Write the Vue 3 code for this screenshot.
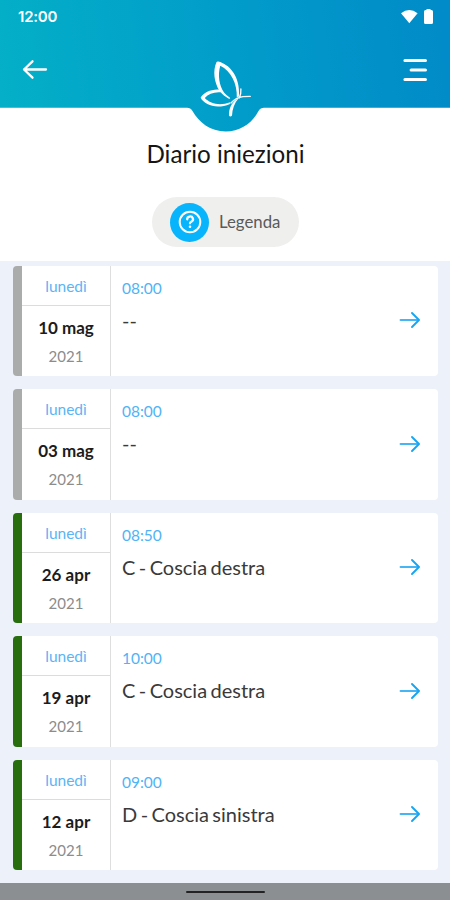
<script setup>
const entries = [
  { day: 'lunedì', date: '10 mag', year: '2021', time: '08:00', site: '--', done: false },
  { day: 'lunedì', date: '03 mag', year: '2021', time: '08:00', site: '--', done: false },
  { day: 'lunedì', date: '26 apr', year: '2021', time: '08:50', site: 'C - Coscia destra', done: true },
  { day: 'lunedì', date: '19 apr', year: '2021', time: '10:00', site: 'C - Coscia destra', done: true },
  { day: 'lunedì', date: '12 apr', year: '2021', time: '09:00', site: 'D - Coscia sinistra', done: true },
]
</script>

<template>
  <div class="screen">
    <header class="header">
      <svg class="backdrop" width="450" height="132" viewBox="0 0 450 132">
        <defs>
          <linearGradient id="sea" gradientUnits="userSpaceOnUse" x1="0" y1="80" x2="450" y2="25">
            <stop offset="0" stop-color="#04afc7" />
            <stop offset="0.5" stop-color="#019dca" />
            <stop offset="1" stop-color="#018bc8" />
          </linearGradient>
        </defs>
        <path fill="url(#sea)" d="M0 0H450V107.700H264Q260.500 107.700 258.500 111C253 122 241 131.500 225.700 131.500S198.500 122 192.500 111Q190.500 107.700 187 107.700H0Z" />
        <g fill="#fff" fill-rule="evenodd">
          <path d="M218.300 61.500C229 64 240.500 76 239 96.500L236.800 97.500C237.300 84 231 71 220.300 65.800C217.500 75 219.300 86 224 92.500Q226.500 95.500 230.300 98L229.300 99C225.500 97 222 94.500 219.500 90.800C214 82 212.800 71 216.300 62.500Q217 61.200 218.300 61.500Z" />
          <path d="M220 89.700C212 88.700 203.500 92.500 200.600 97.800C205 105.500 217 109.500 230 104L230.300 102.200C220 106 210.500 104 204.800 98C208.500 93.500 214.500 91.500 221.700 92.300Z" />
          <path d="M229 115.800C228.700 109 231 104 236 99.800L238.500 98.600C234.500 103 232.300 109 232 115.500Q230.500 117.300 229 115.800Z" />
        </g>
        <path fill="none" stroke="#fff" stroke-width="1.300" stroke-linecap="round" d="M231 103Q236 97.500 243 96.700L250.300 96.400M239.300 98Q241.300 93.500 240.900 89" />
      </svg>
      <div class="status">
        <span class="clock">12:00</span>
        <svg class="signals" width="34" height="16" viewBox="0 0 34 16" fill="#fff">
          <path d="M1 4.200Q9.300-2.200 17.600 4.200L9.300 14.200Z" />
          <path d="M26.500 1V0H30.500V1H31.500Q33 1 33 2.500V13.500Q33 15 31.500 15H25.500Q24 15 24 13.500V2.500Q24 1 25.500 1Z" />
        </svg>
      </div>
      <div class="toolbar">
        <svg width="26" height="22" viewBox="0 0 26 22" fill="none" stroke="#fff" stroke-width="2.300" stroke-linecap="round" stroke-linejoin="round">
          <path d="M24 10.500H2M10.500 2.300L2 10.500L10.500 18.700" />
        </svg>
        <svg width="26" height="24" viewBox="0 0 26 24" fill="none" stroke="#fff" stroke-width="3.200" stroke-linecap="round">
          <path d="M3 2.500H23.400M9.200 12H23.400M3 21.500H23.400" />
        </svg>
      </div>
    </header>

    <section class="intro">
      <h1>Diario iniezioni</h1>
      <button class="legend">
        <span class="badge">
          <svg width="24" height="24" viewBox="0 0 24 24" fill="none" stroke="#fff" stroke-width="2" stroke-linecap="round" stroke-linejoin="round">
            <circle cx="12" cy="12" r="10.300" />
            <path stroke-width="2.300" d="M9.200 9.300A2.900 2.700 0 1 1 13.600 11.500Q12 12.300 12 13.300" />
            <path stroke-width="2.600" d="M12 16.700V16.800" />
          </svg>
        </span>
        <span class="legend-text">Legenda</span>
      </button>
    </section>

    <main class="list">
      <article v-for="e in entries" :key="e.date" class="card" :class="{ done: e.done }">
        <div class="when">
          <div class="day">{{ e.day }}</div>
          <div class="date">{{ e.date }}</div>
          <div class="year">{{ e.year }}</div>
        </div>
        <div class="what">
          <div class="time">{{ e.time }}</div>
          <div class="site">{{ e.site }}</div>
        </div>
        <svg class="go" width="22" height="18" viewBox="0 0 22 18" fill="none" stroke-linecap="round" stroke-linejoin="round">
          <path stroke="#45b5f5" stroke-width="1.800" d="M1.500 9H19.500" />
          <path stroke="#17a5f2" stroke-width="1.900" d="M13 2L20 9L13 16" />
        </svg>
      </article>
    </main>

    <footer class="navbar"><span class="handle"></span></footer>
  </div>
</template>

<style>
body {
  margin: 0;
}
</style>

<style scoped>
.screen {
  width: 450px;
  height: 900px;
  overflow: hidden;
  display: flex;
  flex-direction: column;
  background: #fff;
  font-family: Lato, "Liberation Sans", sans-serif;
}
.header {
  position: relative;
  height: 108px;
  flex: none;
}
.backdrop {
  position: absolute;
  top: 0;
  left: 0;
}
.status {
  position: relative;
  display: flex;
  justify-content: space-between;
  align-items: center;
  height: 33px;
  padding: 0 16px 0 18px;
}
.clock {
  font: 600 15px/20px Inter, sans-serif;
  color: #fff;
  letter-spacing: -0.200px;
}
.toolbar {
  position: relative;
  display: flex;
  justify-content: space-between;
  align-items: center;
  height: 24px;
  margin-top: 25px;
  padding: 0 22px;
}
.intro {
  height: 153px;
  flex: none;
  display: flex;
  flex-direction: column;
  align-items: center;
}
h1 {
  margin: 31px 0 0 1px;
  font-size: 24.200px;
  line-height: 30px;
  font-weight: 400;
  color: #151515;
}
.legend {
  display: flex;
  align-items: center;
  gap: 10px;
  width: 147px;
  height: 50px;
  margin: 28px 0 0 1px;
  padding: 0 0 0 18px;
  border: 0;
  border-radius: 25px;
  background: #efefee;
  font-family: inherit;
}
.badge {
  display: flex;
  align-items: center;
  justify-content: center;
  width: 39px;
  height: 39px;
  border-radius: 50%;
  background: #08b4fc;
}
.legend-text {
  font-size: 16.800px;
  line-height: 22px;
  color: #5a5a5a;
}
.list {
  flex: 1;
  display: flex;
  flex-direction: column;
  gap: 13px;
  padding: 4.700px 12px 0 13px;
  background: #ecf1fa;
}
.card {
  display: flex;
  height: 110.500px;
  flex: none;
  box-sizing: border-box;
  border-left: 9px solid #aaabab;
  border-radius: 4px;
  background: #fff;
}
.card.done {
  border-left-color: #286e0e;
}
.when {
  width: 88px;
  border-right: 1px solid #dedede;
  text-align: center;
}
.day {
  height: 39px;
  border-bottom: 1px solid #dcdcdc;
  font-size: 15.500px;
  line-height: 40px;
  color: #5bb5f5;
}
.date {
  margin-top: 10px;
  font-size: 17px;
  line-height: 23px;
  font-weight: 700;
  color: #1c1c1c;
}
.year {
  margin-top: 6px;
  font-size: 15px;
  line-height: 22px;
  color: #8c8c8c;
}
.what {
  flex: 1;
  padding: 12px 0 0 11px;
}
.time {
  font-size: 15.500px;
  line-height: 20px;
  color: #50b3f6;
}
.site {
  margin-top: 9px;
  font-size: 20px;
  line-height: 26px;
  word-spacing: -1.700px;
  color: #3a3a3a;
}
.go {
  margin: 45.500px 17px 0 0;
}
.navbar {
  display: flex;
  justify-content: center;
  height: 17px;
  flex: none;
  background: #8b8f92;
}
.handle {
  width: 79px;
  height: 2px;
  margin-top: 8px;
  border-radius: 1px;
  background: #222;
}
</style>
